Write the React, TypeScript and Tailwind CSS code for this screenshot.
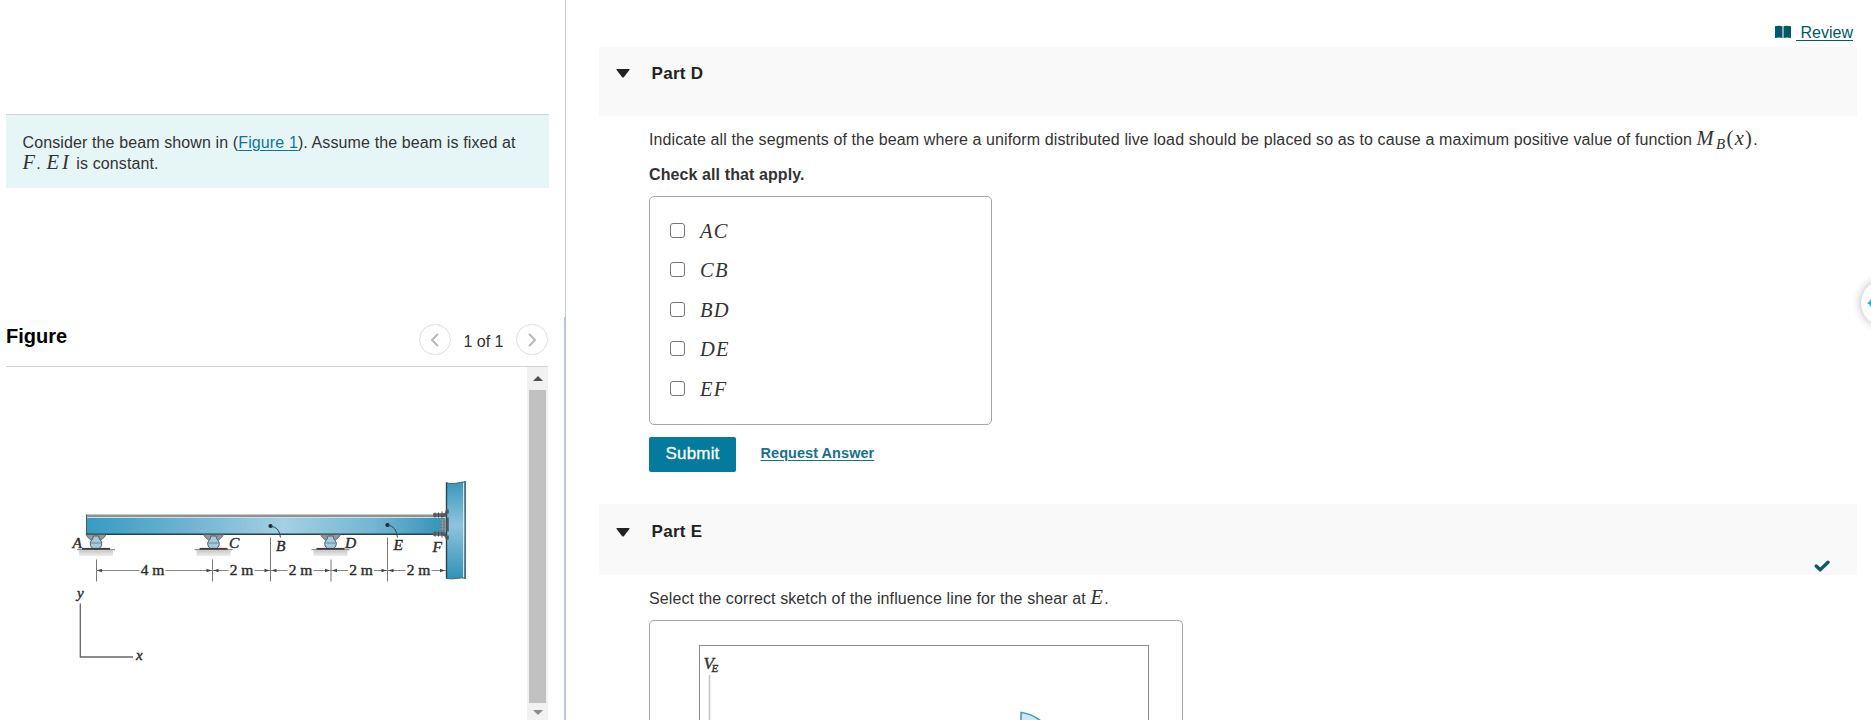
import React from 'react';

const SEGMENTS = ['AC', 'CB', 'BD', 'DE', 'EF'];

const MathText: React.FC<{ children: React.ReactNode }> = ({ children }) => (
    <span className="font-['Liberation_Serif',serif] text-[20.5px] leading-none tracking-[1.3px] italic">{children}</span>
);

const Support: React.FC<{ x: number }> = ({ x }) => (
    <g transform={`translate(${x} 0)`}>
        <rect x="-17" y="551" width="34" height="5.5" fill="url(#ground)" />
        <path d="M-10 535h20q-1 3-5 5.500h-10q-4-2.500-5-5.500z" fill="#8f9496" stroke="#555" strokeWidth="0.8" />
        <path d="M-2.500 536.500h5q.3 3 2.500 5a5.400 5.400 0 0 1-2 7.500h-6a5.400 5.400 0 0 1-2-7.500q2.200-2 2.500-5z" fill="#a5c9da" stroke="#4d6470" strokeWidth="1" />
        <path d="M-5 543.500H5" stroke="#5d7682" strokeWidth="0.8" />
        <path d="M-19 550.200h38" stroke="#777" strokeWidth="1" />
        <path d="M-14 549.300h28" stroke="#3c3c3c" strokeWidth="1.8" />
    </g>
);

const DIMENSIONS = [
    { from: 96, to: 212.5, label: '4 m', x: 152.5 },
    { from: 212.5, to: 270.5, label: '2 m', x: 241.5 },
    { from: 270.5, to: 331, label: '2 m', x: 300.5 },
    { from: 331, to: 387.5, label: '2 m', x: 361 },
    { from: 387.5, to: 446, label: '2 m', x: 418.5 },
];

const BeamFigure: React.FC = () => (
    <svg width="521" height="353" viewBox="6 367.5 521 353" className="shrink-0">
        <defs>
            <linearGradient id="beam" x1="0" x2="1">
                <stop offset="0" stopColor="#359cc0" />
                <stop offset="0.3" stopColor="#72b5d3" />
                <stop offset="0.55" stopColor="#a3d0e4" />
                <stop offset="0.8" stopColor="#72b6d3" />
                <stop offset="1" stopColor="#3193b8" />
            </linearGradient>
            <linearGradient id="column" x1="0" y1="0" x2="0" y2="1">
                <stop offset="0" stopColor="#3997bd" />
                <stop offset="0.45" stopColor="#8ec4dd" />
                <stop offset="1" stopColor="#2f92b8" />
            </linearGradient>
            <linearGradient id="ground" x1="0" y1="0" x2="0" y2="1">
                <stop offset="0" stopColor="#c8c8c8" />
                <stop offset="1" stopColor="#eeeeee" />
            </linearGradient>
        </defs>

        {/* Beam */}
        <rect x="86.5" y="516" width="359" height="18.5" fill="url(#beam)" />
        <rect x="86" y="515" width="360" height="2.5" fill="#8f9292" />
        <rect x="86" y="517.5" width="360" height="1" fill="#d5dde0" />
        <path d="M86.5 515v20" stroke="#3e5a66" />
        <path d="M86 534.8h360" stroke="#26404d" strokeWidth="1.4" />

        {/* Fixed column and its bolted connection */}
        <path d="M446 483c6 2.5 13 0 20-1v97c-6-2-13 2-20-.5z" fill="url(#column)" />
        <path d="M446.5 483v96" stroke="#34424a" strokeWidth="1.4" />
        <path d="M465.3 482v97" stroke="#5c6d75" strokeWidth="1.4" />
        <path d="M463.5 483v95" stroke="#d5e5ec" strokeWidth="1" />
        <path d="M446 483c6 2.5 13 0 20-1M446 578.5c7 2.5 14-1.5 20 .5" fill="none" stroke="#4c626d" />
        <path d="M433 515.500h13M433 534.500h13" stroke="#62686b" strokeWidth="3.500" />
        <path d="M435 513v5M438.500 513v5M442 512v6M435 532v5M438.500 532v5M442 532v6" stroke="#444" />
        <path d="M441 517q5-1 6-7M441 534q5 1 6 6" fill="none" stroke="#555" strokeWidth="2" />
        <path d="M447.500 510v4M447.500 518v14M447.500 536v4" stroke="#555" strokeWidth="2.500" />
        <rect x="440" y="520" width="6" height="12" fill="#849aa3" />
        <path d="M441 521v11M444 521v11" stroke="#4e5960" strokeDasharray="2 1" />

        <Support x={96} />
        <Support x={213.5} />
        <Support x={330.5} />

        {/* Marked sections */}
        <circle cx="270.5" cy="526.5" r="2.1" fill="#1c2b33" />
        <path d="M271 527q8 0 9.500 11" fill="none" stroke="#33444d" />
        <circle cx="387.5" cy="525.5" r="2.1" fill="#1c2b33" />
        <path d="M388 526q8 0 9.500 12" fill="none" stroke="#33444d" />

        {/* Dimensions */}
        <path d="M96.5 560v22M212.500 560v22M270.500 538v44M331 560v22M387.500 538v44" stroke="#777" />
        {DIMENSIONS.map((d, idx) => (
            <g key={idx}>
                <path d={`M${d.from} 571H${d.x - 13}M${d.x + 13} 571H${d.to}`} stroke="#888" />
                <path d={`M${d.from + 1} 571l5-1.700v3.400zM${d.to - 1} 571l-5-1.700v3.400z`} fill="#444" />
            </g>
        ))}
        <g className="font-['Liberation_Serif',serif] text-[15.5px]" fill="#2b2b2b" stroke="#2b2b2b" strokeWidth="0.4" textAnchor="middle">
            {DIMENSIONS.map((d, idx) => (
                <text key={idx} x={d.x} y="575.5">{d.label}</text>
            ))}
        </g>
        <g className="font-['Liberation_Serif',serif] text-[15.5px] italic" fill="#2b2b2b" stroke="#2b2b2b" strokeWidth="0.4">
            <text x="72.500" y="548">A</text>
            <text x="229" y="548">C</text>
            <text x="276" y="551.500">B</text>
            <text x="345" y="548">D</text>
            <text x="393.500" y="550.500">E</text>
            <text x="432.500" y="552.500">F</text>
            <text x="77" y="598" fontSize="15">y</text>
            <text x="136" y="660" fontSize="15">x</text>
        </g>

        {/* Axes */}
        <path d="M80.300 604v53.500H133" fill="none" stroke="#666" strokeWidth="1.300" />
    </svg>
);

const PartHeader: React.FC<{ title: string; done?: boolean }> = ({ title, done }) => (
    <div className={`flex justify-between bg-[#f9f9f9] pl-[17px] ${done ? 'h-[71px]' : 'h-[69px]'}`}>
        <div className={`flex items-center ${done ? 'h-[56px]' : 'h-[53px]'}`}>
            <svg width="14" height="9" viewBox="0 0 14 9"><path d="M1 0h12q1 0 .4 1L8 8q-1 1-2 0L.6 1Q0 0 1 0z" fill="#222" /></svg>
            <h2 className="ml-[21.5px] text-[17px] leading-5 font-bold tracking-[0.3px] text-[#222]">{title}</h2>
        </div>
        {done && (
            <svg className="mt-[56px] mr-[27px]" width="16" height="12" viewBox="0 0 16 12">
                <path d="M2.200 6l4 3.800L14 2.200" fill="none" stroke="#0b5a6e" strokeWidth="3.300" strokeLinecap="round" strokeLinejoin="round" />
            </svg>
        )}
    </div>
);

const PagerButton: React.FC<{ d: string }> = ({ d }) => (
    <button className="flex h-[31px] w-8 items-center justify-center rounded-full border border-[#dedede]">
        <svg width="10" height="14" viewBox="0 0 10 14"><path d={d} fill="none" stroke="#b9b9b9" strokeWidth="2" /></svg>
    </button>
);

const ProblemPanel: React.FC = () => (
    <aside className="flex w-[566px] shrink-0 flex-col">
        <div className="flex h-[317px] flex-col border-r border-[#bfc7d2]">
            <div className="mt-[114px] ml-[6px] h-[74px] w-[543px] border-t border-[#c8d8da] bg-[#e6f6f7] pt-[18px] pl-[16.5px] text-[16px] leading-5 tracking-[0.115px]">
                <p className="h-[19px] whitespace-nowrap">
                    Consider the beam shown in (<a className="text-[#0b7698] underline underline-offset-2">Figure 1</a>). Assume the beam is fixed at
                </p>
                <p className="whitespace-nowrap"><MathText>F</MathText>. <MathText><span className="ml-px tracking-[3px]">EI</span></MathText> is constant.</p>
            </div>
        </div>
        <div className="flex flex-1 flex-col border-r-2 border-[#bac5d6] pr-4 pl-[6px]">
            <div className="flex h-[50px] justify-between border-b border-[#d3d3d3]">
                <h2 className="pt-[7px] text-[20px] leading-6 font-bold text-black">Figure</h2>
                <div className="flex pt-[7px]">
                    <PagerButton d="M8 1L2 7l6 6" />
                    <span className="w-[65px] pt-[8px] text-center text-[16px] leading-5">1 of 1</span>
                    <PagerButton d="M2 1l6 6-6 6" />
                </div>
            </div>
            <div className="flex h-[353px] overflow-hidden">
                <BeamFigure />
                <div className="flex w-[21px] shrink-0 flex-col items-center bg-[#f1f1f1]">
                    <svg className="my-[9px] shrink-0" width="10" height="5" viewBox="0 0 10 5"><path d="M5 0l5 5H0z" fill="#505050" /></svg>
                    <div className="h-[313px] w-[17px] shrink-0 bg-[#c1c1c1]" />
                    <svg className="mt-[7px] shrink-0" width="10" height="5" viewBox="0 0 10 5"><path d="M0 0h10L5 5z" fill="#8c8c8c" /></svg>
                </div>
            </div>
        </div>
    </aside>
);

const App: React.FC = () => (
    <div className="relative flex h-[720px] w-[1871px] overflow-hidden bg-white font-['Liberation_Sans',Arial,sans-serif] text-[16px] text-[#333]">
        <ProblemPanel />

        <main className="ml-[33px] w-[1258px] shrink-0">
            <div className="flex h-[47px] justify-end pt-[22px] pr-[4px] text-[#00586d]">
                <svg className="mt-[3px] mr-[5px]" width="16" height="14" viewBox="0 0 16 14">
                    <path d="M0 1.200Q4 .2 7.500 1.200V13Q4 12 0 13zM8.500 1.200Q12 .2 16 1.200V13Q12 12 8.500 13z" fill="#00586d" />
                </svg>
                <a className="h-5 leading-[21px] whitespace-pre underline underline-offset-2"> Review</a>
            </div>

            <PartHeader title="Part D" />
            <section className="h-[388px] pl-[50px]">
                <p className="h-[49px] pt-[12px] leading-[22px] tracking-[0.115px] whitespace-nowrap">
                    Indicate all the segments of the beam where a uniform distributed live load should be placed so as to cause a maximum positive value of function{' '}
                    <MathText><span className="tracking-[2.5px]">M</span><sub className="text-[15px]">B</sub><span className="not-italic">(</span>x<span className="not-italic">)</span></MathText>.
                </p>
                <p className="h-[31px] leading-5 font-bold tracking-[0.1px]">Check all that apply.</p>
                <div className="flex h-[229px] w-[343px] flex-col rounded-[5px] border border-[#a6a6a6] pt-[13.5px] pl-5">
                    {SEGMENTS.map((s) => (
                        <label key={s} className="flex h-[39.5px] items-center gap-[15px]">
                            <input type="checkbox" className="h-[15px] w-[15px] appearance-none rounded-[3px] border border-[#767676] bg-white" />
                            <span className="pt-px leading-none"><MathText>{s}</MathText></span>
                        </label>
                    ))}
                </div>
                <div className="mt-[12px] flex items-center">
                    <button className="h-[35px] w-[87px] rounded-[2px] bg-[#047a9c] pb-[2px] text-[17px] tracking-[0.2px] text-white [-webkit-text-stroke:0.3px_white]">Submit</button>
                    <a className="ml-[24.5px] pb-px text-[14.5px] font-bold tracking-[0.05px] text-[#16728c] underline underline-offset-2">Request Answer</a>
                </div>
            </section>

            <PartHeader title="Part E" done />
            <section className="pl-[50px]">
                <p className="h-[45px] pt-[12px] leading-[22px] tracking-[0.115px]">
                    Select the correct sketch of the influence line for the shear at <MathText>E</MathText>.
                </p>
                <div className="h-[100px] w-[534px] overflow-hidden rounded-t-[5px] border border-b-0 border-[#a6a6a6] pt-6 pl-[49px]">
                    <div className="h-[75px] w-[450px] border border-b-0 border-[#8b8b8b]">
                        <svg width="448" height="74" viewBox="700 646 448 74">
                            <text x="703.5" y="669" className="font-['Liberation_Serif',serif] text-[17px] italic" fill="#333" stroke="#333" strokeWidth="0.4">
                                V<tspan fontSize="11" dx="-2.5" dy="3">E</tspan>
                            </text>
                            <path d="M709.500 675v45" stroke="#c6c6c6" strokeWidth="1.600" />
                            <path d="M1021 721v-8.500q10 1 20 8.500z" fill="#cde8f5" stroke="#4b9bc0" strokeWidth="1.600" />
                        </svg>
                    </div>
                </div>
            </section>
        </main>

        {/* Floating helper, half off the right edge */}
        <div className="absolute top-[280px] left-[1861px] h-[46px] w-[46px] rounded-full bg-white shadow-[0_0_10px_rgba(0,0,0,0.3)]">
            <svg className="absolute top-[18px] left-[6px]" width="10" height="10" viewBox="0 0 10 10">
                <path d="M0 5l2.500-1.500L3.500 1 4.500 4H10v2.500H4.500L3.500 9 2.500 6.500z" fill="#39a5d6" />
            </svg>
        </div>
    </div>
);

export default App;
